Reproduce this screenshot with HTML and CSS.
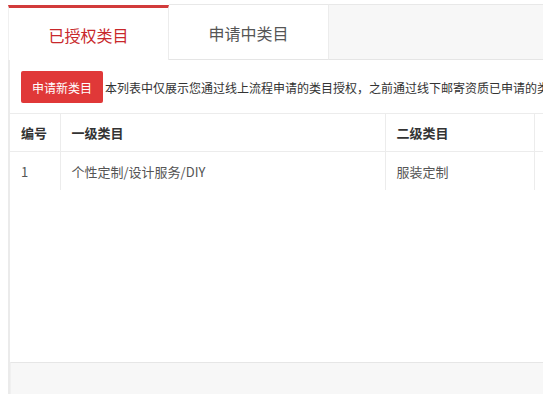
FILE: index.html
```html
<!DOCTYPE html>
<html lang="zh-CN">
<head>
<meta charset="utf-8">
<title>类目授权</title>
<link rel="stylesheet" href="styles.css">
</head>
<body>
<div class="page">
  <div class="tabs">
    <div class="tab tab-active">已授权类目</div>
    <div class="tab">申请中类目</div>
    <div class="tab-fill"></div>
  </div>
  <div class="panel">
    <div class="panel-body">
      <div class="toolbar">
        <button class="btn-primary">申请新类目</button>
        <span class="note">本列表中仅展示您通过线上流程申请的类目授权，之前通过线下邮寄资质已申请的类目授权不在此列表中展示</span>
      </div>
      <table class="grid">
        <colgroup>
          <col class="c-no">
          <col class="c-first">
          <col class="c-second">
          <col class="c-rest">
        </colgroup>
        <thead>
          <tr><th>编号</th><th>一级类目</th><th>二级类目</th><th></th></tr>
        </thead>
        <tbody>
          <tr><td>1</td><td>个性定制/设计服务/DIY</td><td>服装定制</td><td></td></tr>
        </tbody>
      </table>
    </div>
    <div class="panel-foot"></div>
  </div>
</div>
</body>
</html>
```
FILE: styles.css
```css
html, body {
  margin: 0;
  padding: 0;
  overflow: hidden;
  background: #fff;
}
body {
  font-family: "Noto Sans CJK SC", "Liberation Sans", sans-serif;
  color: #333;
}
.page {
  width: 900px;
  padding: 4px 0 0 8px;
}
.tabs {
  display: flex;
  height: 56px;
}
.tab {
  width: 160px;
  box-sizing: border-box;
  border-top: 1px solid #e8e8e8;
  border-right: 1px solid #ececec;
  border-bottom: 1px solid #e5e5e5;
  background: #fff;
  font-size: 16px;
  color: #555;
  display: flex;
  align-items: center;
  justify-content: center;
  padding-top: 2px;
}
.tab-active {
  width: 161px;
  margin-top: 1px;
  border-top: 3px solid #d23b3b;
  border-left: 1px solid #f0f0f0;
  border-right: 1px solid #ececec;
  border-bottom: none;
  color: #c8282b;
}
.tab-fill {
  flex: 1;
  background: #f7f7f7;
  border-top: 1px solid #e8e8e8;
  border-bottom: 1px solid #e5e5e5;
}
.panel {
  border-left: 2px solid #ebebeb;
}
.panel-body {
  height: 302px;
  box-sizing: border-box;
}
.toolbar {
  display: flex;
  align-items: center;
  gap: 2px;
  padding: 11px 0 0 11px;
  height: 32px;
  white-space: nowrap;
}
.btn-primary {
  width: 82px;
  height: 32px;
  border: none;
  border-radius: 2px;
  background: #e03838;
  color: #fff;
  font-family: inherit;
  font-size: 12px;
  padding: 0;
}
.note {
  font-size: 12px;
  color: #333;
}
.grid {
  margin-top: 10px;
  border-collapse: collapse;
  table-layout: fixed;
  width: 700px;
}
.c-no { width: 50px; }
.c-first { width: 325px; }
.c-second { width: 149px; }
.grid th, .grid td {
  text-align: left;
  padding: 0 11px;
  font-size: 13px;
  border-left: 1px solid #ececec;
}
.grid th:first-child, .grid td:first-child {
  border-left: none;
}
.grid th {
  height: 37px;
  font-weight: bold;
  color: #333;
  border-top: 1px solid #ececec;
  border-bottom: 1px solid #ececec;
}
.grid td {
  height: 38px;
  color: #555;
}
.panel-foot {
  height: 60px;
  background: #f7f7f7;
  border-top: 1px solid #e6e6e6;
  border-left: 1px solid #f0f0f0;
}
```
